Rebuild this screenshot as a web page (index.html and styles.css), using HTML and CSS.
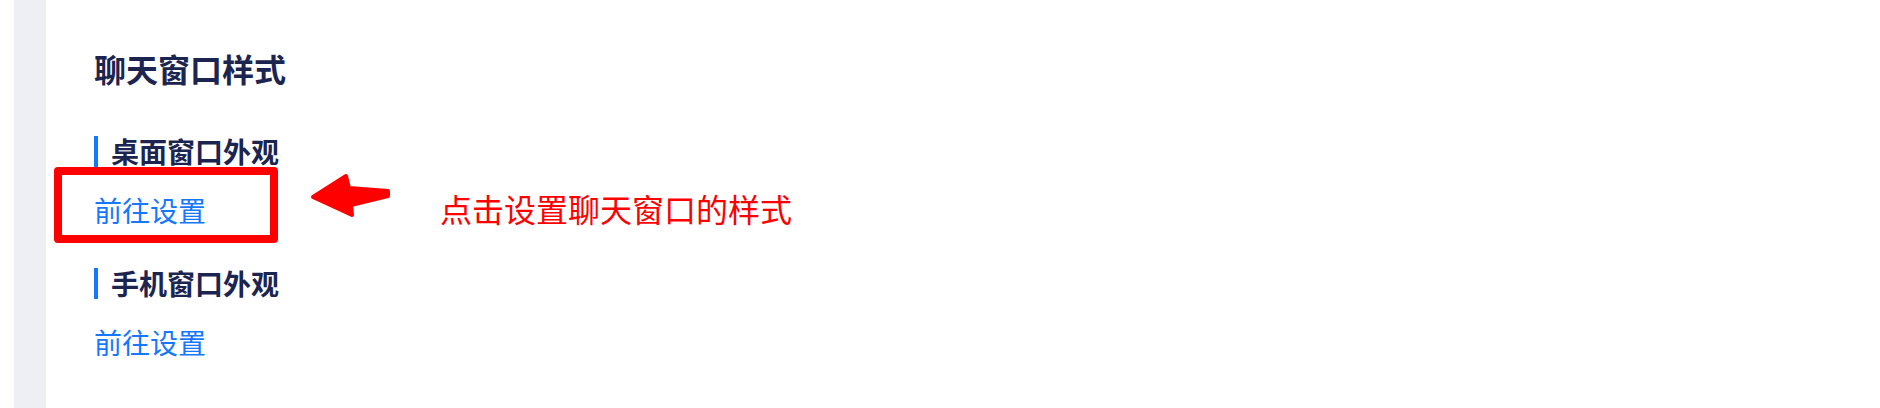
FILE: index.html
```html
<!DOCTYPE html>
<html lang="zh">
<head>
<meta charset="utf-8">
<link rel="stylesheet" href="styles.css">
</head>
<body>
<div class="page">
  <div class="edge"></div>
  <div class="rail"></div>
  <main class="main">
    <h1 class="title">聊天窗口样式</h1>
    <section class="group">
      <h2 class="sub">桌面窗口外观</h2>
      <a class="link">前往设置</a>
    </section>
    <section class="group group-2">
      <h2 class="sub">手机窗口外观</h2>
      <a class="link">前往设置</a>
    </section>
    <div class="mark-box"></div>
    <svg class="mark-arrow" width="90" height="50" viewBox="0 0 90 50">
      <polygon points="4,25 37,4 40,16 79,19 79,24 42,33 43,43" fill="#ff0000" stroke="#ff0000" stroke-width="4" stroke-linejoin="round"/>
    </svg>
    <div class="mark-text">点击设置聊天窗口的样式</div>
  </main>
</div>
</body>
</html>
```
FILE: styles.css
```css
html, body {
  margin: 0;
  padding: 0;
  background: #ffffff;
}
body {
  font-family: "Noto Sans CJK SC", "Noto Sans", sans-serif;
}
.page {
  display: flex;
  height: 408px;
  position: relative;
}
.edge {
  width: 14px;
  flex: none;
}
.rail {
  width: 32px;
  flex: none;
  background: #eeeff5;
}
.main {
  flex: 1;
  padding: 52px 0 0 48px;
  display: flex;
  flex-direction: column;
  align-items: flex-start;
}
.title {
  margin: 0 0 52px 0;
  font-size: 32px;
  line-height: 32px;
  font-weight: 700;
  color: #1c2450;
}
.group {
  display: flex;
  flex-direction: column;
  align-items: flex-start;
  gap: 28px;
}
.group-2 {
  margin-top: 42px;
}
.sub {
  margin: 0;
  font-size: 28px;
  line-height: 31px;
  font-weight: 700;
  color: #1c2450;
  border-left: 4px solid #1677ff;
  padding-left: 13px;
}
.link {
  font-size: 28px;
  line-height: 31px;
  color: #1677ff;
  cursor: pointer;
}
.mark-box {
  position: absolute;
  left: 54px;
  top: 167px;
  width: 224px;
  height: 76px;
  box-sizing: border-box;
  border: 8px solid #ff0000;
  border-radius: 4px;
}
.mark-arrow {
  position: absolute;
  left: 309px;
  top: 172px;
}
.mark-text {
  position: absolute;
  left: 440px;
  top: 190px;
  font-size: 32px;
  line-height: 36px;
  color: #ff0000;
  white-space: nowrap;
}
```
